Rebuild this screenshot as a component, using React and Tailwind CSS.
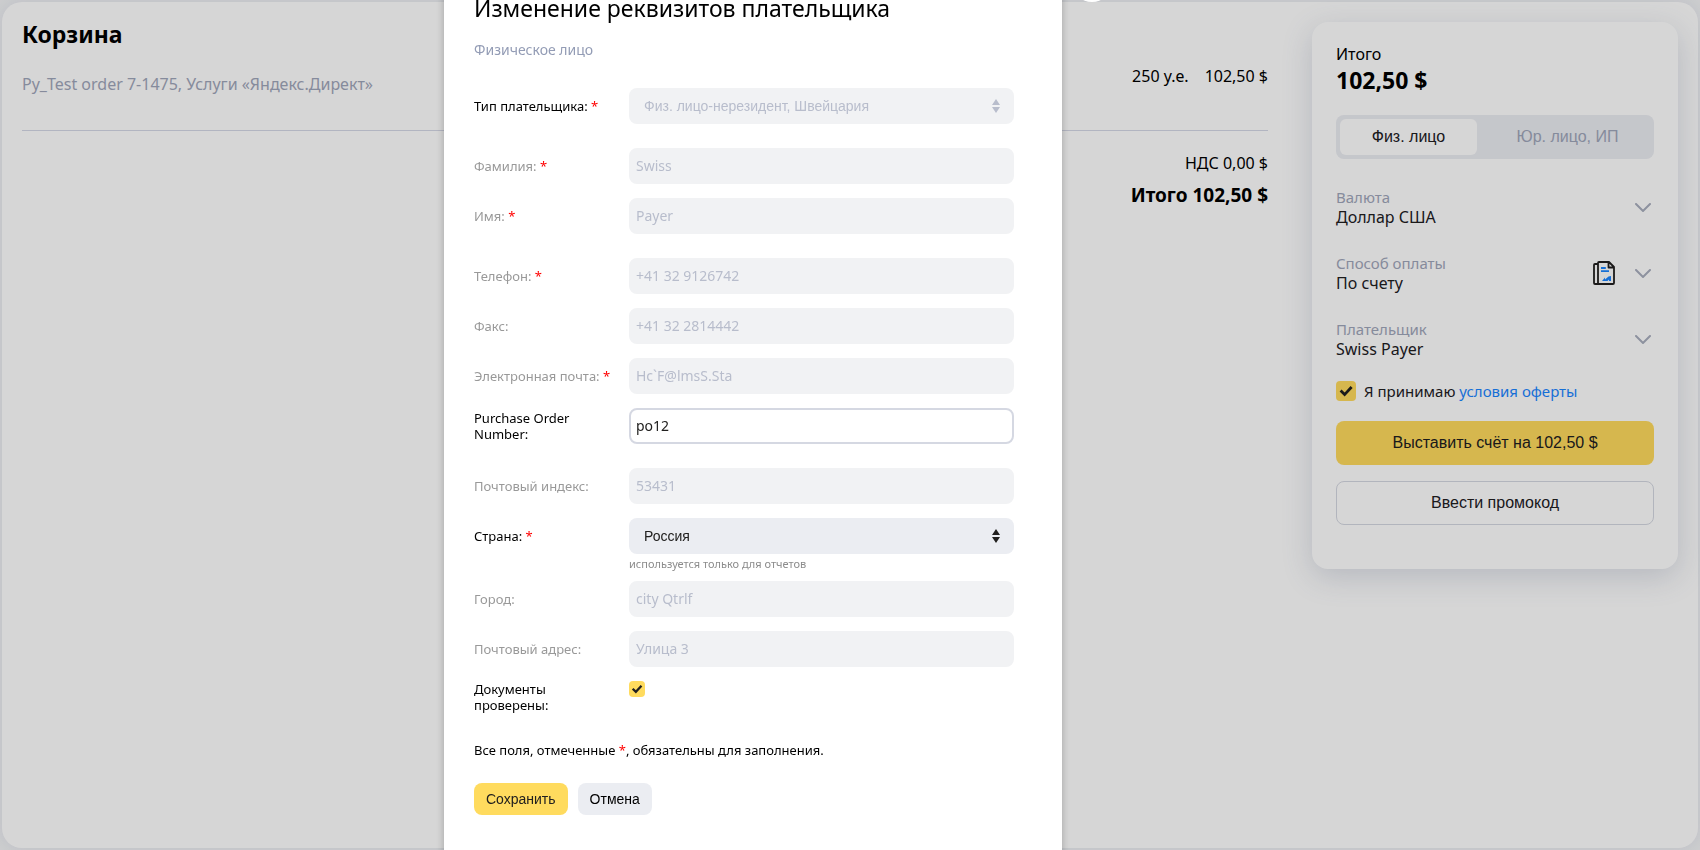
import React from 'react';

const inputClass =
  'block h-9 w-full rounded-lg border-2 border-[#d5d8e2] bg-white px-[5px] pb-0.5 text-sm text-[#21201f] outline-none disabled:border-[#f1f2f4] disabled:bg-[#f1f2f4] disabled:text-[#b8bdcc]';

function Field({ label, id, required, muted, hint, className = 'mb-3.5', labelClass = 'items-center', children }) {
  return (
    <div className={`flex ${className}`}>
      <label
        htmlFor={id}
        className={`flex h-9 w-[155px] shrink-0 leading-4 ${labelClass} ${muted ? 'text-[#999]' : 'text-black'}`}
      >
        <span className="w-[144px]">
          {label}
          {required && <span className="text-[#f00]"> *</span>}
        </span>
      </label>
      <div className="min-w-0 flex-1">
        {children}
        {hint && <p className="pt-0.5 text-[11px] leading-4 text-[#8c8c8c]">{hint}</p>}
      </div>
    </div>
  );
}

function TextField({ value, ...props }) {
  return (
    <Field {...props}>
      <input id={props.id} type="text" defaultValue={value} disabled={props.muted} className={inputClass} />
    </Field>
  );
}

function SelectBox({ id, value, disabled }) {
  return (
    <div className={`relative ${disabled ? 'text-[#b8bdcc]' : 'text-[#21201f]'}`}>
      <select
        id={id}
        disabled={disabled}
        className="block h-9 w-full appearance-none rounded-lg bg-[#ebedf2] pr-8 pl-[15px] font-['Liberation_Sans',sans-serif] text-sm opacity-100 outline-none disabled:bg-[#f1f2f4]"
      >
        <option>{value}</option>
      </select>
      <svg viewBox="0 0 8 14" className="pointer-events-none absolute top-[11px] right-3.5 h-3.5 w-2" fill="currentColor">
        <path d="M4 0 8 6H0ZM4 14 8 8H0Z" />
      </svg>
    </div>
  );
}

function Tick({ id, small, label }) {
  return (
    <span className={`relative block shrink-0 ${small ? 'size-4' : 'size-5'}`}>
      <input
        id={id}
        type="checkbox"
        defaultChecked
        aria-label={label}
        className="block size-full appearance-none rounded-sm bg-[#ffdb5e]"
      />
      <svg
        viewBox="0 0 20 20"
        className="pointer-events-none absolute inset-0 size-full"
        fill="none"
        stroke="#21201f"
        strokeWidth="2.8"
      >
        <path d="m4.6 9.6 4 4 7-7.6" />
      </svg>
    </span>
  );
}

function BillIcon() {
  return (
    <svg viewBox="0 0 22 24" className="h-6 w-[22px]" fill="none">
      <path
        d="M5 2Q5 1 6 1H16L21 6V22Q21 23 20 23H5ZM5 3H2Q1 3 1 4V22Q1 23 2 23H5M15.500 1V6.500H21"
        stroke="#21201f"
        strokeWidth="1.800"
        strokeLinejoin="round"
      />
      <path d="M8 7H12.800M8 10.200H16" stroke="#1a85ff" strokeWidth="1.800" />
      <path d="M9 20 12 16.500V18.500L15.500 15.500 18 15V20H16V18.500L14.500 20Z" fill="#1a85ff" />
    </svg>
  );
}

function Option({ title, value, icon }) {
  return (
    <button type="button" className="mb-[26px] flex h-10 w-full items-center text-left">
      <span className="flex-1">
        <span className="block text-[15px] leading-5 text-[#9fa6ba]">{title}</span>
        <span className="block leading-5 text-[#21201f]">{value}</span>
      </span>
      {icon}
      <svg viewBox="0 0 16 9" className="mr-[3px] ml-5 h-[9px] w-4" fill="none" stroke="#a9aebe" strokeWidth="2" strokeLinecap="round">
        <path d="m1 1 7 7 7-7" />
      </svg>
    </button>
  );
}

function Summary() {
  return (
    <aside className="w-[366px] shrink-0 rounded-2xl bg-white px-6 pt-5 pb-11 shadow-[0_8px_30px_rgba(80,95,130,0.22)]">
      <p className="leading-6 text-black">Итого</p>
      <p className="text-[23px] leading-7 font-bold text-black">102,50 $</p>
      <div className="mt-[21px] mb-7 flex h-11 gap-2 rounded-lg bg-[#ebedf2] p-1 font-['Liberation_Sans',sans-serif]">
        <button type="button" className="w-[137px] rounded-md bg-white text-[#21201f]">
          Физ. лицо
        </button>
        <button type="button" className="flex-1 text-[#9fa6ba]">
          Юр. лицо, ИП
        </button>
      </div>
      <Option title="Валюта" value="Доллар США" />
      <Option title="Способ оплаты" value="По счету" icon={<BillIcon />} />
      <Option title="Плательщик" value="Swiss Payer" />
      <div className="-mt-1 mb-5 flex h-5 items-center gap-2 text-[15px] text-[#21201f]">
        <Tick id="offer" />
        <label htmlFor="offer">
          Я принимаю{' '}
          <a href="#offer" className="text-[#1a85ff]">
            условия оферты
          </a>
        </label>
      </div>
      <button
        type="button"
        className="mb-4 h-11 w-full rounded-lg bg-[#ffdb5e] font-['Liberation_Sans',sans-serif] text-[#21201f]"
      >
        Выставить счёт на 102,50 $
      </button>
      <button
        type="button"
        className="block h-11 w-full rounded-lg border border-[#d5d8e2] font-['Liberation_Sans',sans-serif] text-[#21201f]"
      >
        Ввести промокод
      </button>
    </aside>
  );
}

function Cart() {
  return (
    <main className="flex flex-1 items-start gap-11 rounded-[20px] bg-white p-5 shadow-[0_0_20px_rgba(80,95,130,0.12)]">
      <section className="min-w-0 flex-1 text-black">
        <h1 className="text-[23px] leading-6 font-bold">Корзина</h1>
        <div className="flex items-start border-b border-[#d5d8e6] pt-[18px] pb-[34px] leading-6">
          <p className="flex-1 pt-2 text-[#9fa6ba]">Py_Test order 7-1475, Услуги «Яндекс.Директ»</p>
          <p>250 у.е.</p>
          <p className="ml-4">102,50 $</p>
        </div>
        <p className="pt-5 text-right leading-6">НДС 0,00 $</p>
        <p className="pt-1 text-right text-[19px] leading-8 font-bold">Итого 102,50 $</p>
      </section>
      <Summary />
    </main>
  );
}

function PayerDialog() {
  return (
    <div className="fixed inset-0 flex justify-center overflow-hidden bg-black/16 pr-[194px]">
      <div
        role="dialog"
        aria-label="Изменение реквизитов плательщика"
        className="relative -mt-[38px] min-h-[950px] w-[618px] shrink-0 bg-white px-[30px] pt-[30px] pb-20 shadow-[0_0_8px_rgba(0,0,0,0.25)]"
      >
        <button
          type="button"
          aria-label="Закрыть"
          className="absolute top-0 -right-[50px] flex size-10 items-center justify-center rounded-full bg-white"
        />
        <h2 className="text-[23px] leading-8 text-black">Изменение реквизитов плательщика</h2>
        <p className="mt-4 mb-7 text-sm leading-5 text-[#939cb5]">Физическое лицо</p>
        <form className="pr-[18px] text-[13px]">
          <Field label="Тип плательщика:" id="type" required className="mb-6">
            <SelectBox id="type" value="Физ. лицо-нерезидент, Швейцария" disabled />
          </Field>
          <TextField label="Фамилия:" id="lname" value="Swiss" required muted />
          <TextField label="Имя:" id="fname" value="Payer" required muted className="mb-6" />
          <TextField label="Телефон:" id="phone" value="+41 32 9126742" required muted />
          <TextField label="Факс:" id="fax" value="+41 32 2814442" muted />
          <TextField label="Электронная почта:" id="email" value="Hc`F@lmsS.Sta" required muted />
          <TextField label="Purchase Order Number:" id="po" value="po12" className="mb-6" />
          <TextField label="Почтовый индекс:" id="zip" value="53431" muted />
          <Field label="Страна:" id="country" required hint="используется только для отчетов" className="mb-[9px]">
            <SelectBox id="country" value="Россия" />
          </Field>
          <TextField label="Город:" id="city" value="city Qtrlf" muted />
          <TextField label="Почтовый адрес:" id="address" value="Улица 3" muted />
          <Field label="Документы проверены:" id="verified" labelClass="items-start" className="mb-6">
            <Tick id="verified" small />
          </Field>
          <p className="mb-6 leading-[18px] text-black">
            Все поля, отмеченные <span className="text-[#f00]">*</span>, обязательны для заполнения.
          </p>
          <div className="flex gap-2.5 font-['Liberation_Sans',sans-serif] text-sm">
            <button type="button" className="h-8 rounded-lg bg-[#ffdb5e] px-3 text-[#21201f]">
              Сохранить
            </button>
            <button type="button" className="h-8 rounded-lg bg-[#ebedf2] px-3 text-black">
              Отмена
            </button>
          </div>
        </form>
      </div>
    </div>
  );
}

export default function App() {
  return (
    <div className="flex min-h-screen flex-col bg-[#f5f6f8] p-0.5 font-['Noto_Sans',sans-serif] text-base">
      <Cart />
      <PayerDialog />
    </div>
  );
}
